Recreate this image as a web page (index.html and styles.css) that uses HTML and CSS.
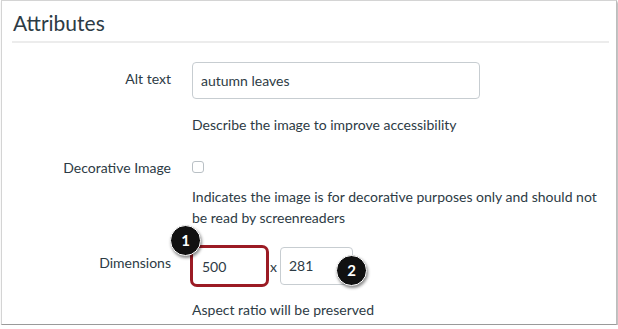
FILE: index.html
```html
<!DOCTYPE html>
<html>
<head>
<meta charset="utf-8">
<link rel="stylesheet" href="styles.css">
</head>
<body>
<div class="frame">
  <h2 class="title">Attributes</h2>
  <div class="form">
    <div class="label label-alt">Alt text</div>
    <div class="control">
      <div class="input input-alt">autumn leaves</div>
      <div class="hint hint-alt">Describe the image to improve accessibility</div>
    </div>

    <div class="label label-deco">Decorative Image</div>
    <div class="control">
      <div class="checkbox"></div>
      <div class="hint hint-deco">Indicates the image is for decorative purposes only and should not be read by screenreaders</div>
    </div>

    <div class="label label-dim">Dimensions</div>
    <div class="control">
      <div class="dims">
        <div class="input input-w">500<span class="badge badge-1">1</span></div>
        <span class="times">x</span>
        <div class="input input-h">281<span class="badge badge-2">2</span></div>
      </div>
      <div class="hint hint-dim">Aspect ratio will be preserved</div>
    </div>
  </div>
</div>
</body>
</html>
```

FILE: styles.css
```css
html, body {
  margin: 0;
  padding: 0;
  background: #ffffff;
}
body {
  font-family: Lato, "Open Sans", "Liberation Sans", sans-serif;
  color: #2d3b45;
}
.frame {
  box-sizing: border-box;
  margin-left: 1px;
  width: 616px;
  height: 325px;
  border: 1px solid #d4d4d4;
  border-right-color: #bdbdbd;
  border-bottom-color: #9a9a9a;
  box-shadow: 1px 2px 2px rgba(0, 0, 0, 0.35);
  padding: 0 7px 0 10px;
}
.title {
  margin: 0;
  padding: 9px 0 0 1px;
  height: 31px;
  font-size: 21px;
  font-weight: 400;
  line-height: 26px;
  border-bottom: 2px solid #ececec;
}
.form {
  display: grid;
  grid-template-columns: 159px 1fr;
  column-gap: 21px;
  margin-left: -10px;
  padding-left: 10px;
  padding-top: 19px;
}
.label {
  text-align: right;
  font-size: 14px;
  line-height: 20px;
}
.label-alt { padding-top: 7px; }
.label-deco { padding-top: 3px; }
.label-dim { padding-top: 8px; }
.control {
  display: flex;
  flex-direction: column;
  align-items: flex-start;
}
.input {
  box-sizing: border-box;
  border: 1px solid #c7cdd1;
  border-radius: 4px;
  font-size: 14px;
  line-height: 20px;
  color: #2d3b45;
  background: #fff;
}
.input-alt {
  width: 288px;
  height: 37px;
  padding: 8px 8px;
}
.hint {
  font-size: 14px;
  line-height: 21px;
}
.hint-alt {
  margin-top: 15px;
  margin-bottom: 20px;
}
.checkbox {
  box-sizing: border-box;
  width: 12px;
  height: 12px;
  border: 1px solid #b9c0c5;
  border-radius: 3px;
  margin-top: 6px;
}
.hint-deco {
  margin-top: 13px;
  width: 420px;
  margin-bottom: 17px;
}
.dims {
  display: flex;
  align-items: center;
  margin-left: -2px;
}
.input-w {
  position: relative;
  width: 79px;
  height: 42px;
  border: 3px solid #9b1b24;
  border-radius: 7px;
  padding: 9px 9px;
}
.times {
  font-size: 14px;
  margin: 0 3px 0 1px;
}
.input-h {
  position: relative;
  width: 73px;
  height: 38px;
  padding: 8px 8px;
}
.badge {
  position: absolute;
  box-sizing: border-box;
  width: 31px;
  height: 31px;
  border-radius: 50%;
  background: #111;
  border: 1px solid #ffffff;
  box-shadow: 1px 2px 3px rgba(0, 0, 0, 0.45);
  color: #fff;
  font-size: 15px;
  font-weight: 700;
  line-height: 29px;
  text-align: center;
}
.badge-1 {
  left: -23px;
  top: -23px;
}
.badge-2 {
  left: 55px;
  top: 7px;
}
.hint-dim {
  margin-top: 12px;
}
```
